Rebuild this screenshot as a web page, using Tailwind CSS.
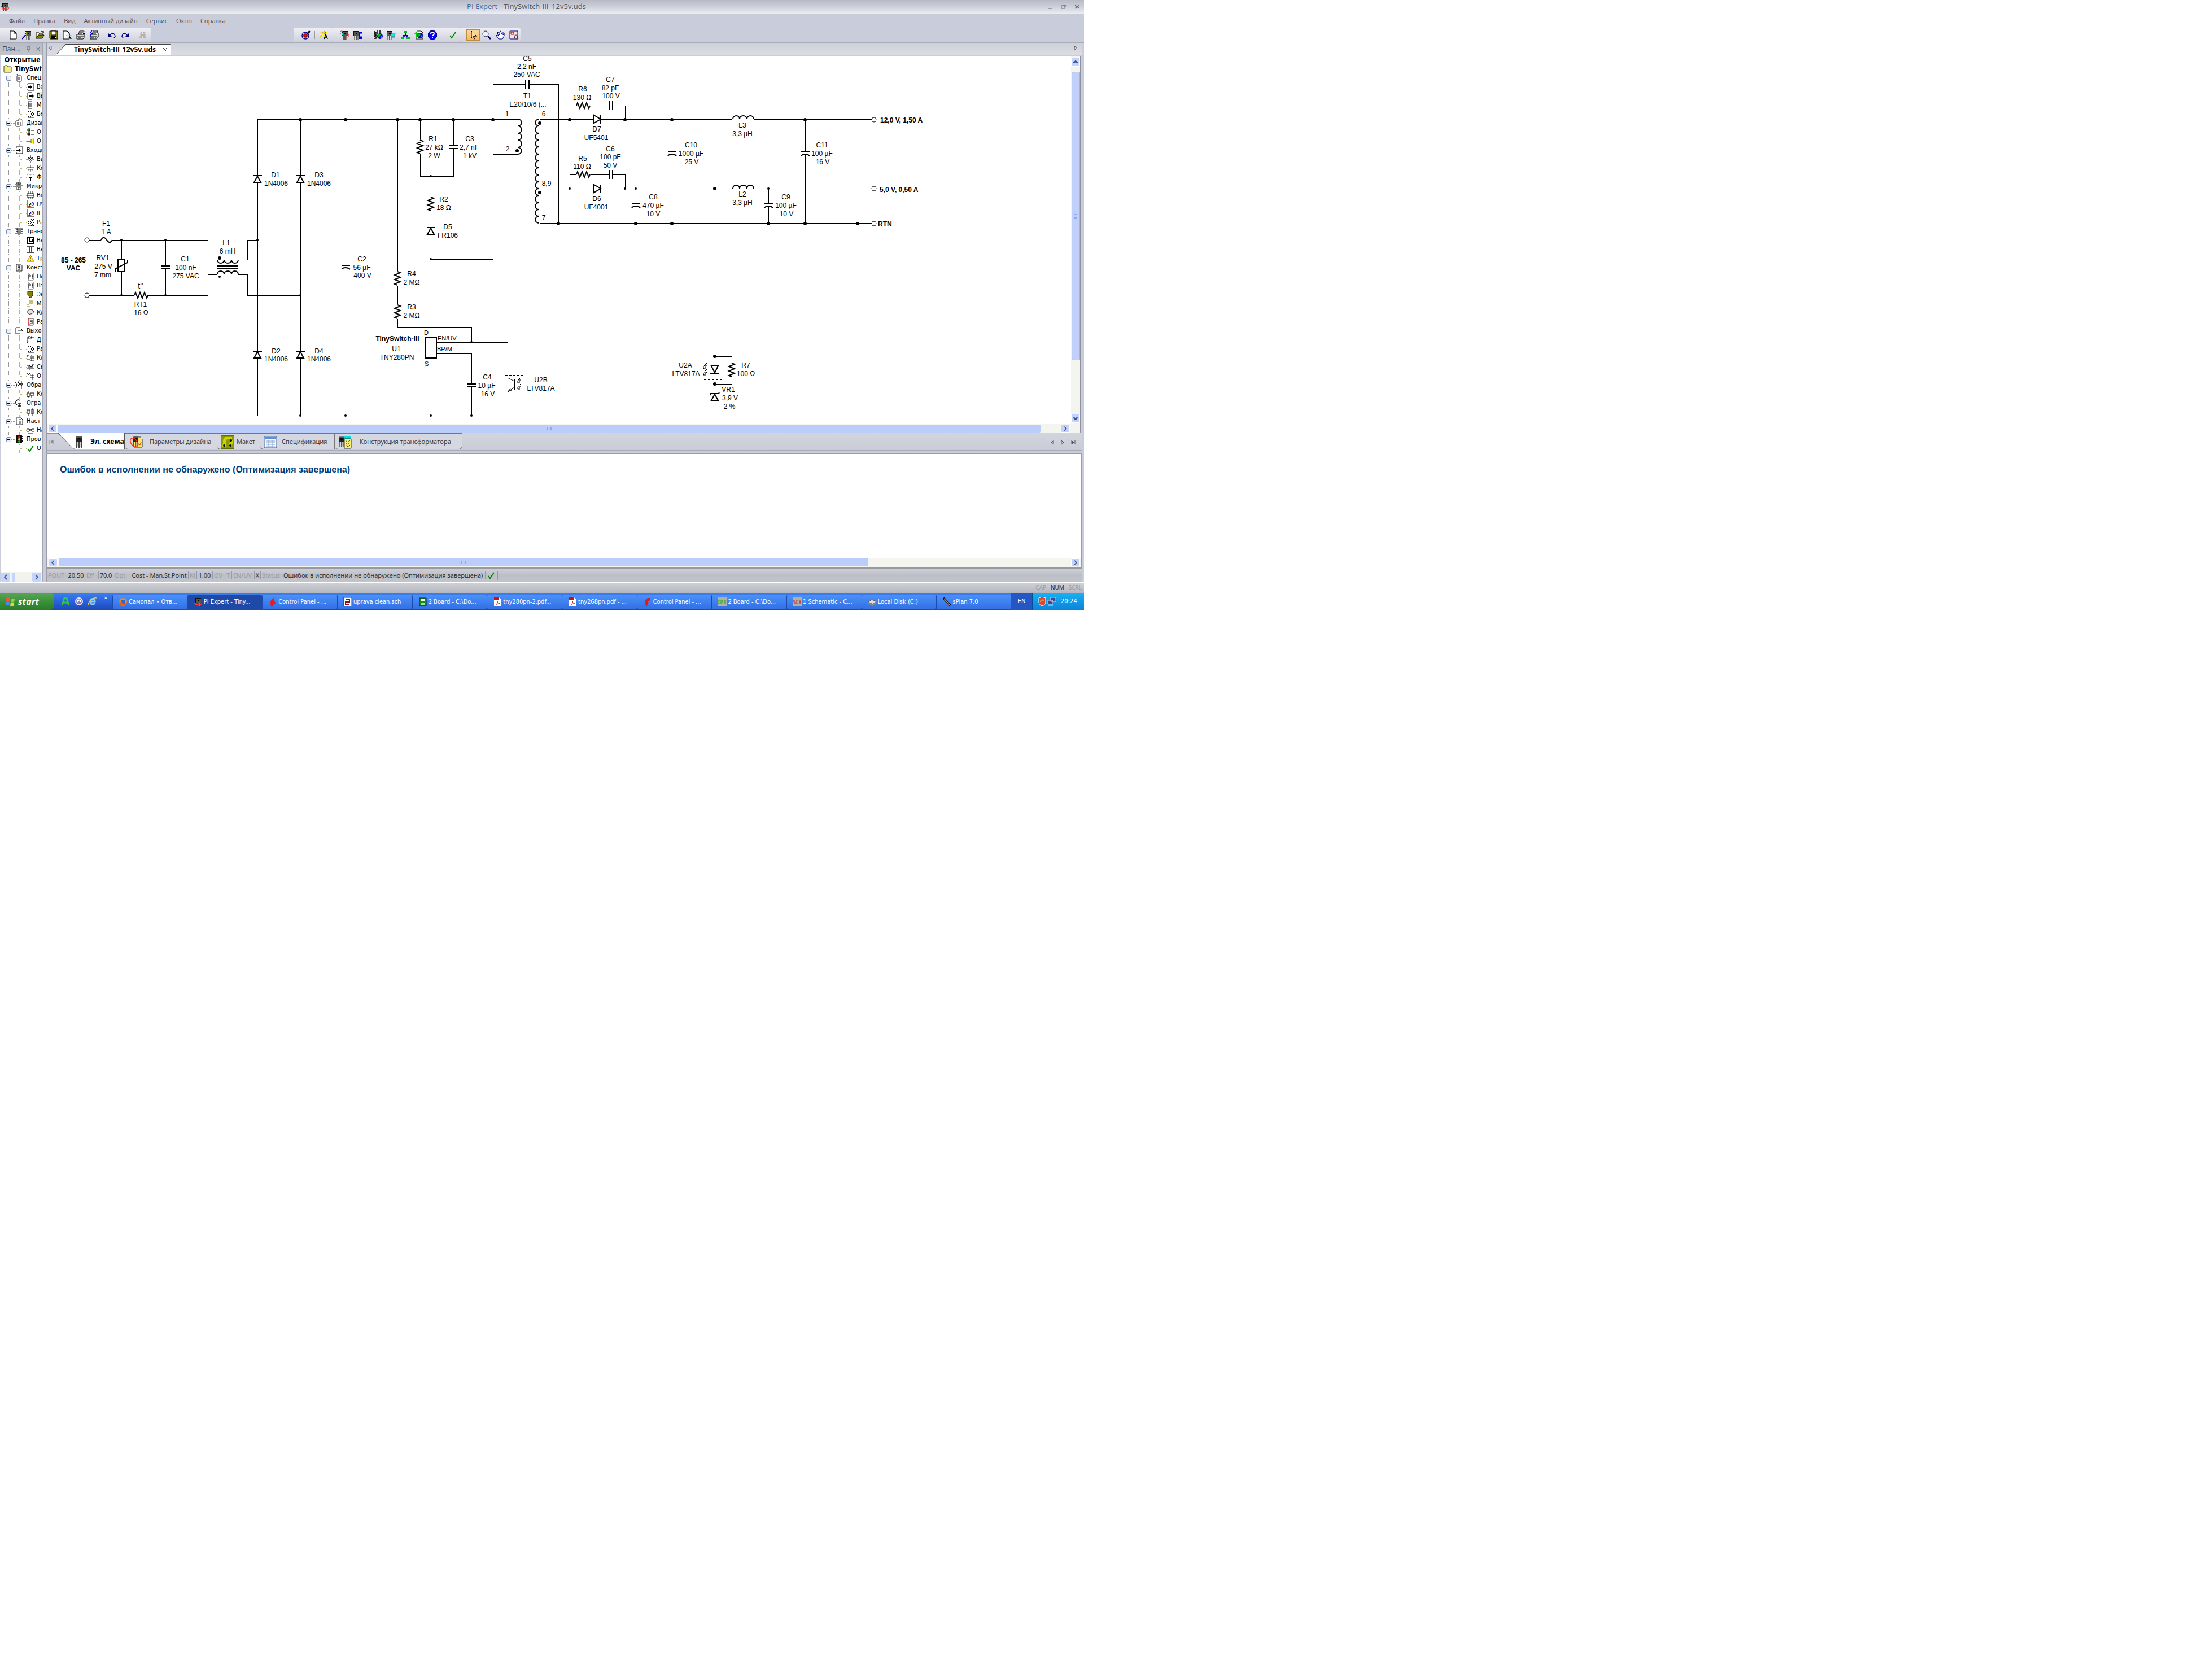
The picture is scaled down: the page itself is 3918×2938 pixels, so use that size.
<!DOCTYPE html>
<html lang="ru">
<head>
<meta charset="utf-8">
<title>PI Expert - TinySwitch-III_12v5v.uds</title>
<script src="https://cdn.jsdelivr.net/npm/@tailwindcss/browser@4"></script>
</head>
<body class="bg-white font-['Open_Sans','Noto_Sans',sans-serif] text-xs text-[#1a1a1a]">

<svg class="hidden" aria-hidden="true">
  <defs>
    <symbol id="chip" viewBox="0 0 16 16"><path d="M3 1h10v8h-1v7h-2V9H9v7H7V9H6v7H4V9H3z" fill="#555"/><path d="M3 1h10v2H3zM3 3h1v6H3z" fill="#111"/><path d="M7 4h3v3H7z" fill="#000"/><path d="M10 9h2v7h-2zM4 9h1v7H4z" fill="#8c8a70"/></symbol>
    <symbol id="new" viewBox="0 0 16 16"><path d="M3 1h7l4 4v10H3z" fill="#fff" stroke="#000"/><path d="M10 1v4h4" fill="none" stroke="#000"/></symbol>
    <symbol id="wizard" viewBox="0 0 16 16"><use href="#chip" x="3"/><path d="M0 15L8 6" stroke="#00009c" stroke-width="2"/><path d="M5 2l6 6M11 3l-6 6M8 2v8" stroke="#ff0"/></symbol>
    <symbol id="open" viewBox="0 0 16 16"><path d="M1 13V4h5l1 2h6v3" fill="#ffff9c" stroke="#000"/><path d="M1 14l4-6h10l-3 6z" fill="#848200" stroke="#000"/><path d="M9 3c2-3 4-2 5 1m0-3v3h-3" fill="none" stroke="#000"/></symbol>
    <symbol id="save" viewBox="0 0 16 16"><path d="M1 1h14v14H2l-1-1z" fill="#848200" stroke="#000"/><path d="M4 1h8v7H4z" fill="#fff" stroke="#000"/><path d="M4 10h9v5H4z" fill="#000"/><path d="M10 11h2v3h-2z" fill="#fff"/></symbol>
    <symbol id="preview" viewBox="0 0 16 16"><path d="M1 1h7l4 4v10H1z" fill="#fff" stroke="#000"/><circle cx="10" cy="9" r="3" fill="#d8f0f4" stroke="#333"/><path d="M12 11l3 4" stroke="#000" stroke-width="2"/></symbol>
    <symbol id="print" viewBox="0 0 16 16"><path d="M4 7l2-6h8l-2 6z" fill="#fff" stroke="#000"/><path d="M1 7h12l2-2v6l-3 4H1z" fill="#d8d8d8" stroke="#000"/><path d="M1 10h12M3 12h8M6 3h6M5 5h6" stroke="#000"/><path d="M8 12h2v1H8z" fill="#ff0"/></symbol>
    <symbol id="printsel" viewBox="0 0 16 16"><use href="#print"/><path d="M0 2l1 2 3-4M0 7l1 2 3-4" stroke="#00f" stroke-width="1.5" fill="none"/></symbol>
    <symbol id="undo" viewBox="0 0 16 16"><path d="M4 11c1-7 10-8 10 0l-2 2" fill="none" stroke="#00007b" stroke-width="1.5"/><path d="M2 5v7h7z" fill="#00007b"/></symbol>
    <symbol id="redo" viewBox="0 0 16 16"><path d="M12 11c-1-7-10-8-10 0l2 2" fill="none" stroke="#00007b" stroke-width="1.5"/><path d="M14 5v7H7z" fill="#00007b"/></symbol>
    <symbol id="find" viewBox="0 0 16 16"><path d="M4 3h3v4h2V3h3l2 10H9v-3H7v3H2z" fill="#b5b2a5"/><path d="M4 7v5M12 7v5M6 4v3M10 4v3" stroke="#e4e2da"/></symbol>
    <symbol id="target" viewBox="0 0 16 16"><circle cx="7" cy="9" r="6" fill="#fff" stroke="#000084" stroke-width="1.5"/><circle cx="7" cy="9" r="3" fill="#f00" stroke="#000" stroke-width="1.5"/><path d="M9 7l6-6M12 1v3h3" stroke="#000" stroke-width="1.5" fill="none"/></symbol>
    <symbol id="auto" viewBox="0 0 16 16"><path d="M1 13L11 3" stroke="#e7d800" stroke-width="2"/><path d="M3 5l8-4" stroke="#f66"/><path d="M2 4l10 8M11 1l4 5" stroke="#ff0" stroke-width="2"/><path d="M8 6l5-4" stroke="#22c"/><path d="M9 15l3-8 3 8M10 12h4" fill="none" stroke="#000" stroke-width="1.5"/></symbol>
    <symbol id="optim" viewBox="0 0 16 16"><use href="#chip" x="1"/><path d="M0 3c3-4 5-2 8 2M14 5c3 3 2 6-1 7M0 3c2 4 4 5 7 4" fill="none" stroke="#f33"/><path d="M3 4h3v4H3z" fill="#0ee"/></symbol>
    <symbol id="chipx" viewBox="0 0 16 16"><use href="#chip" x="-3"/><path d="M10 2h6v13h-6z" fill="#00f"/><path d="M12 4l3 4-3 4M15 4l-3 4 3 4" stroke="#fff" fill="none"/></symbol>
    <symbol id="globe" viewBox="0 0 16 16"><circle cx="10" cy="9" r="5" fill="#00c"/><path d="M8 5l3 1-1 3-3 2-1-3zM11 9l3-1-1 4-2 1z" fill="#0b3"/></symbol>
    <symbol id="bom" viewBox="0 0 16 16"><path d="M1 1v2h3v2H1v2h3v2H1v2h3v3H1M7 0v6M11 0v5" stroke="#000" fill="none" stroke-width="1.5"/><use href="#globe" x="1" y="1"/></symbol>
    <symbol id="cart" viewBox="0 0 16 16"><use href="#chip" x="-4"/><path d="M6 6h8l-2 5H7zM9 13h4" fill="#0ef" stroke="#666"/><path d="M13 6l3-2" stroke="#c55"/></symbol>
    <symbol id="net" viewBox="0 0 16 16"><path d="M8 3v5L3 13M8 8l5 5M4 9h8" stroke="#00c" stroke-width="2" fill="none"/><path d="M6 1h5v3H6zM0 11h6v4H0zM10 11h6v4h-6z" fill="#0b2"/></symbol>
    <symbol id="upload" viewBox="0 0 16 16"><path d="M5 1h7l3 3v11H3V8" fill="#fff" stroke="#222"/><path d="M3 2L0 6h2v6h3V6h2z" fill="#0c0"/><use href="#globe"/></symbol>
    <symbol id="help" viewBox="0 0 16 16"><circle cx="8" cy="8" r="8" fill="#00f" stroke="#000060"/><path d="M5 6c0-4 6-4 6 0 0 2-3 2-3 4M8 11v2" stroke="#fff" stroke-width="2" fill="none"/></symbol>
    <symbol id="check" viewBox="0 0 16 16"><path d="M3 9l3 4 7-10" stroke="#008200" stroke-width="2" fill="none"/></symbol>
    <symbol id="arrow" viewBox="0 0 16 16"><path d="M5 1v12l3-3 2 5 2-1-2-4h4z" fill="#ffd99a" stroke="#000"/></symbol>
    <symbol id="zoomer" viewBox="0 0 16 16"><circle cx="6" cy="6" r="5" fill="#eef" stroke="#222"/><path d="M10 10l5 5" stroke="#000084" stroke-width="2.5"/></symbol>
    <symbol id="hand" viewBox="0 0 16 16"><path d="M5 15L1 9l1-1 3 2-2-6 1-1 3 5V2l2-1 1 6 2-5 1 1v5l2-3v4l-3 6z" fill="#fff" stroke="#000084"/></symbol>
    <symbol id="fit" viewBox="0 0 16 16"><path d="M1 1h14v14H1z" fill="#e8e8ee" stroke="#000084"/><path d="M3 3h5v4H3z" fill="none" stroke="#900"/><circle cx="12" cy="11" r="3" fill="none" stroke="#900"/></symbol>

    <symbol id="t-spec" viewBox="0 0 14 14"><path d="M3 3h8v10H3zM5 6h4M5 8h4M5 10h4" fill="none" stroke="#222"/><path d="M3 0l2 4" stroke="#00c"/></symbol>
    <symbol id="t-in" viewBox="0 0 14 14"><path d="M2 3V1h11v12H2v-2" fill="none" stroke="#000"/><path d="M2 6h4V3l4 4-4 4V8H2z"/></symbol>
    <symbol id="t-out" viewBox="0 0 14 14"><path d="M10 1H2v12h8" fill="none" stroke="#000"/><path d="M5 6h4V3l4 4-4 4V8H5z"/></symbol>
    <symbol id="t-list" viewBox="0 0 14 14"><path d="M10 1H3v12h7M3 4h7M3 7h7M3 10h7" fill="none" stroke="#111"/></symbol>
    <symbol id="t-res" viewBox="0 0 14 14"><path d="M5 1L2 4l3 3-3 3 3 3M9 1L6 4l3 3-3 3 3 3M13 1l-3 3 3 3-3 3 3 3M2 13h11" fill="none" stroke="#111"/></symbol>
    <symbol id="t-docs" viewBox="0 0 14 14"><path d="M5 3V0h6l2 2v9h-3" fill="none" stroke="#888"/><path d="M1 3h6l2 2v8H1zM3 6h4M3 8h4M3 10h4" fill="none" stroke="#111"/></symbol>
    <symbol id="t-opt" viewBox="0 0 14 14"><path d="M2 1h4v4H2z" fill="#0c2" stroke="#000"/><path d="M2 8h4v4H2z" fill="#c00" stroke="#000"/><path d="M8 4h5M8 11h5" stroke="#000"/></symbol>
    <symbol id="t-key" viewBox="0 0 14 14"><path d="M0 7h8M1 7v2M3 7v2" stroke="#8a8400" stroke-width="2"/><path d="M8 4l5-1v8l-5-1z" fill="#ff0" stroke="#7a7400"/></symbol>
    <symbol id="t-bridge" viewBox="0 0 14 14"><path d="M7 0v3L2 7l5 4v3M7 3l5 4-5 4M0 7h2M12 7h2M3 3l8 8M11 3l-8 8" fill="none" stroke="#111"/></symbol>
    <symbol id="t-cap" viewBox="0 0 14 14"><path d="M7 1v5M1 6h12M2 11c3-3 7-3 10 0M7 9v5" fill="none" stroke="#222"/></symbol>
    <symbol id="t-pin" viewBox="0 0 14 14"><path d="M1 3l3-2 3 2 3-2 3 2" fill="none" stroke="#999"/><path d="M4 7h6L8 9v5H6V9z" fill="#000"/></symbol>
    <symbol id="t-ic" viewBox="0 0 14 14"><path d="M2 1h8v11H2zM4 3h4v6H4zM0 3h2M0 7h2M10 6h4M6 0v13" fill="none" stroke="#111"/></symbol>
    <symbol id="t-pkg" viewBox="0 0 14 14"><path d="M1 4h12v6H1zM4 0v4M7 0v4M10 0v4M4 10v4M10 10v4M7 10v4M1 7h12" fill="none" stroke="#111"/></symbol>
    <symbol id="t-graph" viewBox="0 0 14 14"><path d="M2 0v13h12" fill="none" stroke="#000"/><path d="M3 10l5-5 6-3" fill="none" stroke="#00a"/><path d="M3 10l5-3 6-2" fill="none" stroke="#080"/><path d="M3 11l5-1 6-3" fill="none" stroke="#a00"/></symbol>
    <symbol id="t-trans" viewBox="0 0 14 14"><path d="M0 1h4v3H1h3v3H1h3v3H0M6 0v13M8 0v13M14 1h-4v3h3-3v3h3-3v4h4" fill="none" stroke="#111"/></symbol>
    <symbol id="t-core" viewBox="0 0 14 14"><path d="M1 2h12v10H1zM5 2v6h5V5" fill="none" stroke="#000" stroke-width="2"/></symbol>
    <symbol id="t-bob" viewBox="0 0 14 14"><path d="M1 2h12M1 12h12M5 2v10M9 2v10" fill="none" stroke="#111" stroke-width="1.5"/></symbol>
    <symbol id="t-warn" viewBox="0 0 14 14"><path d="M7 1l6 11H1z" fill="#ff0" stroke="#f33"/><path d="M7 4v4M7 9v2" stroke="#000"/></symbol>
    <symbol id="t-doc3" viewBox="0 0 14 14"><path d="M2 1h8l2 2v10H2z" fill="#eee" stroke="#222"/><path d="M5 4h3v3H5h3v3H5" fill="none" stroke="#111"/></symbol>
    <symbol id="t-docp" viewBox="0 0 14 14"><path d="M12 1v12H3V1" fill="none" stroke="#555"/><path d="M4 11V4h3v3H4M9 4h2v3H9h2v3H9" fill="none" stroke="#111"/></symbol>
    <symbol id="t-shield" viewBox="0 0 14 14"><path d="M2 1h9v7l-4 5-5-5z" fill="#848200" stroke="#222"/></symbol>
    <symbol id="t-wire" viewBox="0 0 14 14"><path d="M4 1h7M4 3h7M4 5h7M4 7h7M4 9H1l-1 3h6" fill="none" stroke="#848200"/></symbol>
    <symbol id="t-bubble" viewBox="0 0 14 14"><path d="M5 9C-1 7 2 1 7 1s8 5 3 7c-3 2-5 0-8 4" fill="#e4e4e4" stroke="#222"/></symbol>
    <symbol id="t-doc12" viewBox="0 0 14 14"><path d="M3 1h9v12H3z" fill="#eee" stroke="#444"/><path d="M3 1v4M2 9h3l-3 3h4" stroke="#f00" fill="none"/><path d="M7 4h3v3H7h3v3H7" fill="none" stroke="#111"/></symbol>
    <symbol id="t-exit" viewBox="0 0 14 14"><path d="M9 1H1v11h8M4 6h9M10 3l3 3-3 3" fill="none" stroke="#111"/></symbol>
    <symbol id="t-diode" viewBox="0 0 14 14"><path d="M0 3h4M1 3v9l3-2M4 0l5 3-5 3zM9 0v6M9 3h4" fill="none" stroke="#111"/></symbol>
    <symbol id="t-caps" viewBox="0 0 14 14"><path d="M2 1v4M0 3h4M1 9h5M6 4h7M6 7h7M9 1v3M9 7v6M6 12h7" fill="none" stroke="#111"/></symbol>
    <symbol id="t-drive" viewBox="0 0 14 14"><path d="M0 4h5l3 3 3-3V2h3v8H0zM3 7h8M5 10v3" fill="none" stroke="#111"/></symbol>
    <symbol id="t-filter" viewBox="0 0 14 14"><path d="M0 5l2-3 2 3 2-3 1 3M7 6h7M7 9h7M10 3v11" fill="none" stroke="#111"/></symbol>
    <symbol id="t-fb" viewBox="0 0 14 14"><path d="M0 2l3 4-2 6M5 2l3 3-3 3 3 3M9 4h4l-2 5zM11 0v14M6 0v3" fill="none" stroke="#111"/></symbol>
    <symbol id="t-fb2" viewBox="0 0 14 14"><path d="M1 11V5h4v6zM3 1v4M3 11v2M7 5h6v4H7zM9 9v4M0 11h6" fill="none" stroke="#111"/></symbol>
    <symbol id="t-clamp" viewBox="0 0 14 14"><path d="M3 10c-5-4 0-12 5-8M8 8v5M5 8h5M5 12h5" fill="none" stroke="#111" stroke-width="1.5"/></symbol>
    <symbol id="t-clamp2" viewBox="0 0 14 14"><path d="M1 3h5v6H1zM3 9v4M9 2h3v8H9zM10 0v14" fill="none" stroke="#111"/></symbol>
    <symbol id="t-conf" viewBox="0 0 14 14"><path d="M2 1h8l3 3v9H2zM4 4h1M7 4h3M4 7h1M7 7h4M4 10h1M7 10h4" fill="#fff" stroke="#222"/></symbol>
    <symbol id="t-tune" viewBox="0 0 14 14"><path d="M0 4h4l6 5h4M0 9h4l6-5h4M0 6h14M3 12h8" fill="none" stroke="#111"/></symbol>
    <symbol id="t-light" viewBox="0 0 14 14"><path d="M3 0h8v14H3zM1 2h12M1 6h12M1 10h12" stroke="#111" stroke-width="2"/><circle cx="7" cy="3" r="2" fill="#f00"/><circle cx="7" cy="7" r="2" fill="#fd0"/><circle cx="7" cy="11" r="2" fill="#0c0"/></symbol>
    <symbol id="t-ok" viewBox="0 0 14 14"><path d="M2 8l4 4 6-10" stroke="#008a00" stroke-width="2" fill="none"/></symbol>
    <symbol id="t-folder" viewBox="0 0 16 14"><path d="M1 13V2l2-1h4l1 2h6v10z" fill="#f5ef7a" stroke="#444"/></symbol>

    <symbol id="pcb" viewBox="0 0 24 24"><path d="M0 0h24v24H0z" fill="#8a9a00"/><path d="M4 18V8l4-5h12v4H11l-2 3v8zM14 20v-6l7-6v6l-3 6z" fill="#cbd400"/><circle cx="6" cy="18" r="3" fill="#d8e000"/><circle cx="6" cy="18" r="2"/><circle cx="17" cy="18" r="2"/><circle cx="18" cy="9" r="2"/><path d="M0 0h24v24H0z" fill="none" stroke="#3a4200"/></symbol>
    <symbol id="table" viewBox="0 0 24 24"><path d="M1 2h22v20H1z" fill="#f4f8ff" stroke="#2a5090"/><path d="M2 3h20v4H2z" fill="#5b8fe0"/><path d="M4 10h16M4 13h16M4 16h16M4 19h16M9 8v13M15 8v13" stroke="#8ea4c8"/></symbol>
    <symbol id="bigchip" viewBox="0 0 24 24"><path d="M6 2h12v11H6z" fill="#222"/><path d="M6 2h12v3H6z" fill="#555"/><path d="M10 5h4v3h-4z" fill="#000"/><path d="M7 13v10M12 13v10M17 13v10" stroke="#444" stroke-width="2"/><path d="M9 13v9M14 13v9" stroke="#aaa"/></symbol>
    <symbol id="bigparam" viewBox="0 0 24 24"><path d="M8 3h12l3 3v15H8z" fill="#ffe96a" stroke="#333"/><use href="#bigchip" width="20" height="22" x="1"/><path d="M2 12C0 2 10 4 13 10s6 10 8 2M2 12c3 8 8 8 14 6" fill="none" stroke="#f30" stroke-width="1.5"/></symbol>
    <symbol id="bigtrans" viewBox="0 0 24 24"><use href="#bigchip" width="20" height="22" x="-4"/><path d="M11 1h12v5H11z" fill="#0dd"/><path d="M11 6h12v17H11z" fill="#fff27a" stroke="#333"/><path d="M13 9l4 3 4-3M13 13l4 3 4-3M13 17l4 3 4-3" stroke="#333" fill="none"/></symbol>
  </defs>
</svg>

<div class="flex w-full max-w-[1920px] flex-col overflow-hidden bg-[#c9ccda]">

  <header class="flex h-[25px] items-center bg-linear-to-b from-[#b8bac6] via-[#cdd0db] to-[#ececef] pl-px pr-2 border-b border-[#b4b6c2]">
    <svg class="size-4 shrink-0" viewBox="0 0 16 16"><use href="#chip"/><path d="M1 10c4 4 9 4 14 1M1 7l6 5 8-3" stroke="#f22" fill="none"/></svg>
    <h1 class="flex-1 pr-2 text-center text-[13px] text-[#4e5868]"><span class="text-[#3a6ea5]">PI Expert -</span> TinySwitch-III_12v5v.uds</h1>
    <div class="flex items-center gap-4 text-[#666]">
      <button aria-label="Свернуть"><svg class="size-2" viewBox="0 0 8 8"><path d="M0 7h8" stroke="currentColor"/></svg></button>
      <button aria-label="Восстановить"><svg class="size-2" viewBox="0 0 8 8"><path d="M0 2h6v5H0zM2 1h6v4" stroke="currentColor" fill="none"/></svg></button>
      <button aria-label="Закрыть"><svg class="size-2" viewBox="0 0 8 8"><path d="M0 1l8 6M8 1L0 7" stroke="currentColor" stroke-width="1.5"/></svg></button>
    </div>
  </header>

  <nav class="flex h-[25px] items-center gap-[15px] pl-4 text-[11px] text-[#4c4e58]">
    <a href="#">Файл</a><a href="#">Правка</a><a href="#">Вид</a><a href="#">Активный дизайн</a><a href="#">Сервис</a><a href="#">Окно</a><a href="#">Справка</a>
  </nav>

  <div class="flex h-[26px] items-stretch border-b border-[#a9abb8]" id="toolbar"></div>

  <div class="flex">
    <aside class="flex w-[76px] shrink-0 flex-col overflow-hidden border-r border-[#a4a6b0]">
      <div class="mt-px flex h-5 items-center bg-linear-to-b from-[#b9bbc8] to-[#c3c5cb] pl-1 text-xs text-[#4a4a50]">
        <span class="w-[42px]">Пан...</span>
        <svg class="h-3 w-7" viewBox="0 0 28 12"><path d="M2 7h6M3 1v6M7 1v6M3 1h4M5 7v4M18 2l7 8M25 2l-7 8" stroke="#666" fill="none"/></svg>
      </div>
      <div class="ml-px flex-1 overflow-hidden border-l border-t border-[#55534a] bg-white font-['DejaVu_Sans_Condensed','Noto_Sans',sans-serif] text-[11px] whitespace-nowrap" id="tree"></div>
      <div class="ml-0.5 flex h-[18px] items-center justify-between bg-[#f3f3ee] pr-0.5">
        <button class="h-4 w-4 rounded-xs bg-[#c3d3fd]" aria-label="Влево"><svg viewBox="0 0 16 16"><path d="M10 4L6 8l4 4" stroke="#4d6185" stroke-width="2" fill="none"/></svg></button>
        <span class="mr-7 h-4 w-1.5 bg-[#c3d3fd]"></span>
        <button class="h-4 w-4 rounded-xs bg-[#c3d3fd]" aria-label="Вправо"><svg viewBox="0 0 16 16"><path d="M6 4l4 4-4 4" stroke="#4d6185" stroke-width="2" fill="none"/></svg></button>
      </div>
    </aside>

    <main class="ml-1.5 mr-1 flex min-w-0 flex-1 flex-col border-l border-[#9a9ca8]">
      <div class="flex h-[22px] items-end border-b border-[#8f91a0] bg-linear-to-b from-[#cdcfd9] to-[#dcdde4]">
        <svg class="h-5 w-4" viewBox="0 0 16 20"><path d="M8 5v7L4 8z" stroke="#777" fill="none"/></svg>
        <svg class="h-[19px] w-[18px]" viewBox="0 0 18 19"><path d="M0 19L18 0v19z" fill="#fff"/><path d="M0 19L18 0" stroke="#444"/></svg>
        <button class="flex h-[19px] w-[186px] items-center rounded-tr-xs border-r border-t border-[#444] bg-white pl-3.5 text-xs font-bold text-black">TinySwitch-III_12v5v.uds
          <svg class="ml-auto mr-1.5 size-2" viewBox="0 0 8 8"><path d="M0 0l8 8M8 0L0 8" stroke="#444"/></svg></button>
        <svg class="ml-auto mr-1 h-5 w-3" viewBox="0 0 12 20"><path d="M3 5v7l5-4z" stroke="#444" fill="none"/></svg>
      </div>

      <div class="mr-0.5 mt-0.5 flex border-r border-[#8f91a0] bg-white">
        <div class="min-w-0 flex-1 overflow-hidden">
          <svg class="block h-[651px] w-[1812px] max-w-none font-['Liberation_Sans',Arial,sans-serif]" viewBox="83 100 1812 651" font-size="12" fill="#000">
            <defs>
              <g id="resv" fill="none" stroke="#000" stroke-width="2"><path d="M0 0l5 2-10 4 10 4-10 4 10 4-10 4 5 2"/></g>
              <g id="resh" fill="none" stroke="#000" stroke-width="2"><path d="M0 0l2-5 4 10 4-10 4 10 4-10 4 10 2-5"/></g>
              <g id="diode"><path d="M0 1l-6 11H6z" fill="#fff" stroke="#000" stroke-width="2"/><path d="M-7 0H8" stroke="#000" stroke-width="2"/></g>
              <g id="dioder"><path d="M12 0L0-7V7z" fill="#fff" stroke="#000" stroke-width="2"/><path d="M12-7V8" stroke="#000" stroke-width="2"/></g>
              <g id="caph"><path d="M-7 1H8V4H-7z" fill="#fff"/><path d="M-7 0H8M-7 5H8" stroke="#000" stroke-width="2"/></g>
              <g id="capv"><path d="M1-7V8H5V-7z" fill="#fff"/><path d="M0-8V8M6-8V8" stroke="#000" stroke-width="2"/></g>
              <g id="capp"><path d="M-6 1H7V3H-6z" fill="#fff"/><path d="M-7 0H8M-7 7C-4 3 4 3 8 7" fill="none" stroke="#000" stroke-width="2"/></g>
              <path id="coilh" d="M0 0c0-8 12-8 12 0c0-8 13-8 13 0c0-8 12-8 12 0" fill="none" stroke="#000" stroke-width="2"/>
              <circle id="dot" r="3"/>
              <circle id="term" r="4" fill="#fff" stroke="#000"/>
              <path id="rays" d="M6 0L1 5l5 0L0 10M0 6v4h4M6 11L1 16h5L0 21M0 17v4h4" fill="none" stroke="#000"/>
            </defs>

            <g fill="none" stroke="#000" shape-rendering="crispEdges">
              <path d="M456 736V211H917M532 211V736M612 211V736M704 211V579H835V606M744 211V312H803V211M763 312V598M763 634V736M873 211V149H989V396M917 273H873V459H763M456 736H899V694M774 606H899V669M774 626H835V736"/>
              <path d="M957 211H1297M1335 211H1544M957 334H1297M1335 334H1544M957 395H1544M1009 211V187H1107V211M1009 334V309H1107V334M1126 334V395M1190 211V395M1266 334V731H1351V435H1519V395M1361 334V395M1426 211V395M1266 631H1296V680H1266"/>
              <path d="M158 425H179M199 425H368V460H385M422 460H438V425H456M158 523H368V486H385M422 486H438V523H532M215 425V523M293 425V523M933 211V395M938 211V395"/>
              <path d="M1246 637H1280V672H1246M927 664H892V699H924" stroke-dasharray="4 3"/>
            </g>

            <path d="M1020 187H1046M1020 309H1046M238 523H262M704 480V506M704 539V565M744 247V273M763 348V374M1296 642V668" stroke="#fff" stroke-width="3"/>
            <use href="#resh" x="1021" y="187"/><use href="#resh" x="1021" y="309"/><use href="#resh" x="238" y="523"/>
            <use href="#resv" x="704" y="481"/><use href="#resv" x="704" y="540"/><use href="#resv" x="744" y="248"/><use href="#resv" x="763" y="349"/><use href="#resv" x="1296" y="643"/>
            <use href="#diode" x="456" y="311"/><use href="#diode" x="532" y="311"/><use href="#diode" x="456" y="622"/><use href="#diode" x="532" y="622"/><use href="#diode" x="763" y="403"/>
            <use href="#dioder" x="1052" y="211"/><use href="#dioder" x="1052" y="334"/>
            <use href="#caph" x="293" y="471"/><use href="#caph" x="803" y="258"/><use href="#caph" x="835" y="680"/>
            <use href="#capv" x="931" y="149"/><use href="#capv" x="1079" y="187"/><use href="#capv" x="1079" y="309"/>
            <use href="#capp" x="612" y="470"/><use href="#capp" x="1126" y="361"/><use href="#capp" x="1190" y="269"/><use href="#capp" x="1361" y="361"/><use href="#capp" x="1426" y="269"/>
            <use href="#coilh" x="1298" y="211"/><use href="#coilh" x="1298" y="334"/><use href="#coilh" x="385" y="486"/>
            <use href="#coilh" transform="translate(385 460) scale(1 -1)"/>

            <g fill="none" stroke="#000" stroke-width="2">
              <path d="M917 211c9 0 9 12 0 12c9 0 9 13 0 13c9 0 9 12 0 12c9 0 9 13 0 13c9 0 9 12 0 12"/>
              <path d="M955 211c-9 0-9 12 0 12c-9 0-9 13 0 13c-9 0-9 12 0 12c-9 0-9 12 0 12c-9 0-9 13 0 13c-9 0-9 12 0 12c-9 0-9 12 0 12c-9 0-9 13 0 13c-9 0-9 12 0 12c-9 0-9 12 0 12c-9 0-9 12 0 12c-9 0-9 13 0 13c-9 0-9 12 0 12c-9 0-9 12 0 12c-9 0-9 12 0 12"/>
              <path d="M179 425c3-6 7-5 10 0s7 6 10 0M384 471H422M384 475H422"/>
              <path d="M209 460H221V481H209z" fill="#fff"/><path d="M204 481V476L226 465V460"/>
              <path d="M753 598H773V634H753z" fill="#fff"/>
              <path d="M1260 648H1272L1266 660z" fill="#fff"/><path d="M1258 661H1274"/>
              <path d="M1266 698L1260 709H1272z" fill="#fff"/><path d="M1258 700L1259 697H1273L1274 695"/>
              <path d="M911 672V691"/>
            </g>
            <path d="M899 669L911 675M911 686L899 694M905 687l-6 7 7-3" fill="none" stroke="#000"/>
            <use href="#rays" x="1246" y="643"/><use href="#rays" x="917" y="668"/>

            <use href="#dot" x="532" y="212"/><use href="#dot" x="612" y="212"/><use href="#dot" x="704" y="212"/><use href="#dot" x="744" y="212"/><use href="#dot" x="803" y="212"/><use href="#dot" x="873" y="212"/>
            <use href="#dot" x="989" y="396"/><use href="#dot" x="1009" y="212"/><use href="#dot" x="1107" y="212"/><use href="#dot" x="1190" y="212"/><use href="#dot" x="1190" y="396"/><use href="#dot" x="1126" y="396"/><use href="#dot" x="1266" y="334"/><use href="#dot" x="1361" y="396"/><use href="#dot" x="1426" y="212"/><use href="#dot" x="1426" y="396"/><use href="#dot" x="1519" y="396"/><use href="#dot" x="1266" y="631"/><use href="#dot" x="1266" y="680"/>
            <use href="#dot" x="916" y="267"/><use href="#dot" x="956" y="218"/><use href="#dot" x="956" y="341"/><use href="#dot" x="389" y="457"/>
            <g><circle cx="389" cy="490" r="2"/><circle cx="215" cy="425" r="2"/><circle cx="215" cy="523" r="2"/><circle cx="293" cy="425" r="2"/><circle cx="293" cy="523" r="2"/><circle cx="456" cy="425" r="2"/><circle cx="532" cy="523" r="2"/><circle cx="763" cy="312" r="2"/><circle cx="763" cy="459" r="2"/><circle cx="835" cy="606" r="2"/><circle cx="835" cy="736" r="2"/><circle cx="763" cy="736" r="2"/><circle cx="612" cy="736" r="2"/><circle cx="532" cy="736" r="2"/><circle cx="1009" cy="334" r="2"/><circle cx="1107" cy="334" r="2"/><circle cx="1126" cy="334" r="2"/><circle cx="1361" cy="334" r="2"/></g>
            <use href="#term" x="154" y="425"/><use href="#term" x="154" y="523"/><use href="#term" x="1548" y="212"/><use href="#term" x="1548" y="334"/><use href="#term" x="1548" y="396"/>

            <g text-anchor="middle">
              <text x="188" y="400">F1</text><text x="188" y="415">1 A</text>
              <text x="182" y="461">RV1</text><text x="183" y="476">275 V</text><text x="182" y="491">7 mm</text>
              <text x="249" y="511" font-size="14">t°</text><text x="249" y="543">RT1</text><text x="250" y="558">16 Ω</text>
              <text x="328" y="463">C1</text><text x="329" y="478">100 nF</text><text x="329" y="493">275 VAC</text>
              <text x="401" y="434">L1</text><text x="403" y="449">6 mH</text>
              <text x="488" y="314">D1</text><text x="489" y="329">1N4006</text><text x="565" y="314">D3</text><text x="565" y="329">1N4006</text>
              <text x="489" y="626">D2</text><text x="489" y="640">1N4006</text><text x="565" y="626">D4</text><text x="565" y="640">1N4006</text>
              <text x="641" y="463">C2</text><text x="641" y="478">56 µF</text><text x="642" y="492">400 V</text>
              <text x="729" y="489">R4</text><text x="729" y="504">2 MΩ</text><text x="729" y="548">R3</text><text x="729" y="563">2 MΩ</text>
              <text x="767" y="250">R1</text><text x="769" y="265">27 kΩ</text><text x="769" y="280">2 W</text>
              <text x="832" y="250">C3</text><text x="831" y="265">2,7 nF</text><text x="832" y="280">1 kV</text>
              <text x="786" y="357">R2</text><text x="786" y="372">18 Ω</text><text x="793" y="406">D5</text><text x="793" y="421">FR106</text>
              <text x="702" y="622">U1</text><text x="703" y="637">TNY280PN</text>
              <text x="863" y="672">C4</text><text x="862" y="687">10 µF</text><text x="864" y="702">16 V</text>
              <text x="958" y="677">U2B</text><text x="958" y="692">LTV817A</text>
              <text x="934" y="108">C5</text><text x="933" y="122">2,2 nF</text><text x="933" y="136">250 VAC</text>
              <text x="934" y="174">T1</text><text x="935" y="189">E20/10/6 (...</text>
              <text x="898" y="206">1</text><text x="899" y="268">2</text><text x="963" y="206">6</text><text x="968" y="329">8,9</text><text x="963" y="390">7</text>
              <text x="1081" y="145">C7</text><text x="1081" y="160">82 pF</text><text x="1082" y="174">100 V</text>
              <text x="1032" y="162">R6</text><text x="1031" y="177">130 Ω</text><text x="1057" y="233">D7</text><text x="1056" y="248">UF5401</text>
              <text x="1081" y="268">C6</text><text x="1081" y="282">100 pF</text><text x="1081" y="297">50 V</text>
              <text x="1032" y="285">R5</text><text x="1031" y="299">110 Ω</text><text x="1057" y="356">D6</text><text x="1056" y="371">UF4001</text>
              <text x="1157" y="353">C8</text><text x="1157" y="368">470 µF</text><text x="1157" y="383">10 V</text>
              <text x="1224" y="261">C10</text><text x="1224" y="276">1000 µF</text><text x="1225" y="291">25 V</text>
              <text x="1315" y="226">L3</text><text x="1315" y="241">3,3 µH</text><text x="1315" y="348">L2</text><text x="1315" y="363">3,3 µH</text>
              <text x="1392" y="353">C9</text><text x="1392" y="368">100 µF</text><text x="1393" y="383">10 V</text>
              <text x="1456" y="261">C11</text><text x="1456" y="276">100 µF</text><text x="1457" y="291">16 V</text>
              <text x="1214" y="651">U2A</text><text x="1215" y="666">LTV817A</text><text x="1321" y="651">R7</text><text x="1321" y="666">100 Ω</text>
              <text x="1290" y="694">VR1</text><text x="1293" y="709">3,9 V</text><text x="1292" y="724">2 %</text>
              <g font-weight="bold"><text x="130" y="465">85 - 265</text><text x="130" y="479">VAC</text><text x="704" y="604">TinySwitch-III</text></g>
            </g>
            <g font-size="11"><text x="751" y="593">D</text><text x="752" y="648">S</text><text x="775" y="603">EN/UV</text><text x="774" y="622">BP/M</text></g>
            <g font-weight="bold"><text x="1559" y="217">12,0 V, 1,50 A</text><text x="1558" y="340">5,0 V, 0,50 A</text><text x="1555" y="401">RTN</text></g>
          </svg>
        </div>
        <div class="flex w-4 flex-col items-center justify-between bg-[#f5f5f0] py-0.5">
          <button class="size-4 rounded-xs border border-white bg-[#c3d3fd]" aria-label="Вверх"><svg viewBox="0 0 16 16"><path d="M4 10l4-4 4 4" stroke="#40537a" stroke-width="3" fill="none"/></svg></button>
          <div class="mb-[86px] flex h-[511px] w-[15px] items-center justify-center rounded-xs border border-[#9cb4ea] bg-[#c1d0fb]"><span class="h-2 w-1.5 border-y-2 border-[#8ca8ee]"></span></div>
          <button class="size-4 rounded-xs border border-white bg-[#c3d3fd]" aria-label="Вниз"><svg viewBox="0 0 16 16"><path d="M4 6l4 4 4-4" stroke="#40537a" stroke-width="3" fill="none"/></svg></button>
        </div>
      </div>

      <div class="mr-0.5 flex h-4 items-center gap-0.5 border-r border-[#8f91a0] bg-[#f5f5f0] pl-0.5 pr-[18px]">
        <button class="h-3.5 w-4 rounded-xs border border-white bg-[#c3d3fd]" aria-label="Влево"><svg viewBox="0 0 16 12"><path d="M10 2L6 6l4 4" stroke="#40537a" stroke-width="2" fill="none"/></svg></button>
        <div class="flex h-3.5 flex-1 items-center justify-center rounded-xs bg-[#bdcdfb]"><span class="h-1.5 w-2 border-x-2 border-[#8ca8ee]"></span></div>
        <span class="w-8"></span>
        <button class="h-3.5 w-4 rounded-xs border border-white bg-[#c3d3fd]" aria-label="Вправо"><svg viewBox="0 0 16 12"><path d="M6 2l4 4-4 4" stroke="#40537a" stroke-width="2" fill="none"/></svg></button>
      </div>

      <div class="flex h-[31px] items-start border-b border-[#a9abb8] bg-linear-to-b from-[#d3d5de] to-[#c9cbd6] whitespace-nowrap">
        <svg class="h-[29px] w-[49px] shrink-0" viewBox="0 0 49 29"><path d="M20 0L47 28H49V0z" fill="#fff"/><path d="M0 0H20L47 28H49" stroke="#555" fill="none"/><path d="M5 12v7M11 12v7l-4-4z" stroke="#888" fill="#888"/></svg>
        <button class="flex h-[29px] w-[89px] items-center gap-2 border-b border-r border-[#555] bg-white pt-0.5 text-xs font-bold text-black"><svg class="-ml-1 size-6 shrink-0"><use href="#bigchip"/></svg>Эл. схема</button>
        <button class="flex h-[29px] w-[164px] items-center gap-3 rounded-bl-md border-b border-r border-t border-[#777] bg-[#d6d8e1] pl-2 pt-0.5 text-[11px] text-[#333]"><svg class="size-6 shrink-0"><use href="#bigparam"/></svg>Параметры дизайна</button>
        <button class="flex h-[29px] w-[76px] items-center gap-1 rounded-bl-md border-b border-r border-t border-[#777] bg-[#d6d8e1] pl-1.5 pt-0.5 text-[11px] text-[#333]"><svg class="size-6 shrink-0"><use href="#pcb"/></svg>Макет</button>
        <button class="flex h-[29px] w-[132px] items-center gap-2 rounded-bl-md border-b border-r border-t border-[#777] bg-[#d6d8e1] pl-1.5 pt-0.5 text-[11px] text-[#333]"><svg class="size-6 shrink-0"><use href="#table"/></svg>Спецификация</button>
        <button class="flex h-[29px] w-[226px] items-center gap-3.5 rounded-b-md border-b border-r border-t border-[#777] bg-[#d6d8e1] pl-1.5 pt-0.5 text-[11px] text-[#333]"><svg class="size-6 shrink-0"><use href="#bigtrans"/></svg>Конструкция трансформатора</button>
        <svg class="ml-auto mr-2.5 h-[29px] w-12" viewBox="0 0 48 29"><path d="M8 13v7l-4-3zM22 13v7l4-3z" fill="none" stroke="#555"/><path d="M40 13v7l4-3zM46 13v7" fill="#555" stroke="#555"/></svg>
      </div>

      <section class="mt-[5px] flex h-[201px] flex-col border border-b-0 border-[#9a9ca8] bg-white">
        <p class="flex-1 pl-[22px] pt-4 font-['Liberation_Sans',Arial,sans-serif] text-base font-bold text-[#004080]">Ошибок в исполнении не обнаружено (Оптимизация завершена)</p>
        <div class="flex h-4 items-center gap-0.5 bg-[#f5f5f0] px-0.5">
          <button class="h-3.5 w-4 rounded-xs border border-white bg-[#c3d3fd]" aria-label="Влево"><svg viewBox="0 0 16 12"><path d="M10 2L6 6l4 4" stroke="#40537a" stroke-width="2" fill="none"/></svg></button>
          <div class="flex h-3.5 w-[78.5%] items-center justify-center rounded-xs border-r border-[#88a4e0] bg-[#bdcdfb]"><span class="h-1.5 w-2 border-x-2 border-[#8ca8ee]"></span></div>
          <button class="ml-auto h-3.5 w-4 rounded-xs border border-white bg-[#c3d3fd]" aria-label="Вправо"><svg viewBox="0 0 16 12"><path d="M6 2l4 4-4 4" stroke="#40537a" stroke-width="2" fill="none"/></svg></button>
        </div>
      </section>

      <footer class="mt-px flex h-[26px] items-center border-t-2 border-[#989aa2] bg-linear-to-b from-[#cfd0d6] via-[#bdbfc7] to-[#c2c4cc] pl-0.5 text-[11px] whitespace-nowrap text-[#2a2a2e]">
        <span class="w-[34px] border-r border-[#999ba6] text-[#999ba6]">POUT</span><span class="w-8 border-r border-[#999ba6] text-center">20,50</span>
        <span class="w-6 border-r border-[#999ba6] pl-0.5 text-[#999ba6]">Eff</span><span class="w-[26px] border-r border-[#999ba6] text-center">70,0</span>
        <span class="w-[30px] border-r border-[#999ba6] pl-0.5 text-[#999ba6]">Opt.</span><span class="w-[103px] border-r border-[#999ba6] text-center">Cost - Man.St.Point</span>
        <span class="w-[15px] border-r border-[#999ba6] pl-0.5 text-[#999ba6]">KI</span><span class="w-7 border-r border-[#999ba6] text-center">1,00</span>
        <span class="w-[22px] border-r border-[#999ba6] pl-0.5 text-[#999ba6]">OV</span><span class="w-3 border-r border-[#999ba6] pl-0.5 text-[#999ba6]">T</span><span class="w-10 border-r border-[#999ba6] pl-0.5 text-[#999ba6]">EN/UV</span><span class="w-[11px] border-r border-[#999ba6] text-center">X</span>
        <span class="w-10 pl-0.5 text-[#999ba6]">Status</span><span class="w-[358px] border-r border-[#999ba6]">Ошибок в исполнении не обнаружено (Оптимизация завершена)</span>
        <span class="w-[22px] border-r border-[#999ba6] pl-0.5"><svg class="size-4"><use href="#check"/></svg></span>
      </footer>
    </main>
  </div>

  <div class="flex h-[19px] items-center justify-end gap-2 border-t border-white bg-linear-to-b from-[#d0d1d6] to-[#b4b6bf] pr-1 text-[10px]">
    <span class="text-[#999ba6]">CAP</span><span class="text-[#222]">NUM</span><span class="text-[#999ba6]">SCRL</span>
  </div>

  <div class="flex h-[30px] items-stretch bg-linear-to-b from-[#3a80f0] via-[#2a62dc] to-[#1f49b4] font-['DejaVu_Sans_Condensed','Noto_Sans',sans-serif] text-[11px] text-white">
    <button class="flex w-24 items-center gap-1 rounded-r-lg bg-linear-to-b from-[#58a558] via-[#3a923a] to-[#2c7c2c] pl-2.5 font-['Open_Sans',sans-serif] text-base font-bold italic">
      <svg class="size-[18px]" viewBox="0 0 18 18"><path d="M1 3c3-2 5-1 7 0L7 9c-2-1-4-1-7 0z" fill="#f1582c"/><path d="M10 4c2 1 4 1 7-1l-2 7c-2 1-4 1-6 0z" fill="#8fcf3c"/><path d="M0 10c3-1 5-1 7 0l-1 6c-2-1-4-1-6 0z" fill="#3f8ff0"/><path d="M9 11c2 1 4 1 6 0l-1 6c-2 1-4 1-6 0z" fill="#fbcc2c"/></svg>start</button>
    <div class="flex w-[103px] items-center gap-2 pl-3">
      <svg class="size-4" viewBox="0 0 16 16"><path d="M2 15L6 2h4l4 13M4 10h8" stroke="#2ecc40" stroke-width="3" fill="none"/></svg>
      <svg class="size-4" viewBox="0 0 16 16"><circle cx="8" cy="8" r="6" fill="#8a7ac0" stroke="#e8e0ff" stroke-width="2"/><path d="M5 9c1-5 6-4 6 0" stroke="#fff" stroke-width="2" fill="none"/></svg>
      <svg class="size-4" viewBox="0 0 16 16"><path d="M4 8h8c0-5-7-6-8 0s6 6 8 3" stroke="#7fd0ff" stroke-width="3" fill="none"/><path d="M1 14C-1 9 9 0 15 2" stroke="#f5c838" fill="none" stroke-width="1.5"/></svg>
      <span class="-mt-3 ml-1">»</span>
    </div>
    <div class="flex min-w-0 flex-1 items-stretch" id="tasks"></div>
    <div class="flex w-[37px] shrink-0 items-center justify-center bg-[#2456c4]">EN</div>
    <div class="flex w-[92px] shrink-0 items-center gap-0.5 border-l border-[#0a4c96] bg-linear-to-b from-[#18b0f4] to-[#0d84d8] pl-2.5">
      <svg class="h-4 w-3.5" viewBox="0 0 14 16"><path d="M1 2l6-2 6 2v7c0 4-3 6-6 7-3-1-6-3-6-7z" fill="#e8402c" stroke="#fff"/><path d="M4 9c0-4 4-4 6-3" stroke="#8c4" stroke-width="2" fill="none"/></svg>
      <svg class="size-4" viewBox="0 0 16 16"><path d="M6 1h9v7H6zM1 6h9v7H1z" fill="#3a4b8c" stroke="#cfd8f0"/><path d="M2 15h8" stroke="#cfd8f0"/></svg>
      <time class="ml-1.5">20:24</time>
    </div>
  </div>
</div>

<script>
  const icon = (id, cls) => `<svg class="${cls}"><use href="#${id}"/></svg>`;

  const toolbar = [
    { cls: 'w-[268px] pl-[11px]', items: ['new', 'wizard', 'open', 'save', 'preview', 'print', 'printsel', '|', 'undo', 'redo', '|', 'find'] },
    { cls: 'ml-[252px] w-[68px] pl-2.5', items: ['target', '|', 'auto'] },
    { cls: 'w-[60px] pl-2.5', items: ['optim', 'chipx'] },
    { cls: 'w-[132px] pl-2.5', items: ['bom', 'cart', 'net', 'upload', 'help'] },
    { cls: 'w-9 pl-2.5', items: ['check'] },
    { cls: 'w-[106px] pl-2.5', items: ['arrow', 'zoomer', 'hand', 'fit'] },
  ];
  const names = { new: 'Новый', open: 'Открыть', save: 'Сохранить', print: 'Печать', undo: 'Отменить', redo: 'Повторить', find: 'Найти', help: 'Справка' };
  document.getElementById('toolbar').innerHTML = toolbar.map(g =>
    `<div class="flex shrink-0 items-center rounded-r-xs border-b border-[#a0a2b0] bg-linear-to-b from-[#eeeef3] to-[#cfd1dc] ${g.cls}">` +
    g.items.map(i => i === '|'
      ? '<span class="mx-[3px] h-3.5 w-px bg-[#9a9cab]"></span>'
      : `<button aria-label="${names[i] || i}" class="flex h-5 w-6 shrink-0 items-center justify-center ${i === 'arrow' ? 'border border-[#c08a3c] bg-linear-to-b from-[#fbd9a2] to-[#f9b65c]' : ''}">${icon(i, 'size-4 shrink-0')}</button>`).join('') +
    '</div>').join('');

  const tree = [
    [1, 't-spec', 'Специ'], [2, 't-in', 'Вх'], [2, 't-out', 'Вы'], [2, 't-list', 'М'], [2, 't-res', 'Бе'],
    [1, 't-docs', 'Дизай'], [2, 't-opt', 'О'], [2, 't-key', 'О'],
    [1, 't-in', 'Входн'], [2, 't-bridge', 'Вы'], [2, 't-cap', 'Ко'], [2, 't-pin', 'Ф'],
    [1, 't-ic', 'Микро'], [2, 't-pkg', 'Вы'], [2, 't-graph', 'UV'], [2, 't-graph', 'IL'], [2, 't-res', 'Ра'],
    [1, 't-trans', 'Транс'], [2, 't-core', 'Вы'], [2, 't-bob', 'Вы'], [2, 't-warn', 'Тр'],
    [1, 't-doc3', 'Конст'], [2, 't-docp', 'Пе'], [2, 't-docp', 'Вт'], [2, 't-shield', 'Эк'], [2, 't-wire', 'М'], [2, 't-bubble', 'Ко'], [2, 't-doc12', 'Ра'],
    [1, 't-exit', 'Выхо'], [2, 't-diode', 'Д'], [2, 't-res', 'Ра'], [2, 't-caps', 'Ко'], [2, 't-drive', 'Сн'], [2, 't-filter', 'О'],
    [1, 't-fb', 'Обра'], [2, 't-fb2', 'Ко'],
    [1, 't-clamp', 'Огра'], [2, 't-clamp2', 'Ко'],
    [1, 't-conf', 'Наст'], [2, 't-tune', 'На'],
    [1, 't-light', 'Пров'], [2, 't-ok', 'О'],
  ];
  document.getElementById('tree').innerHTML =
    '<div class="flex h-4 items-center pl-1.5 text-xs font-bold text-black">Открытые</div>' +
    `<div class="flex h-4 items-center pl-1 text-xs font-bold text-black">${icon('t-folder', 'mr-1 h-3.5 w-4 shrink-0')}TinySwit</div>` +
    tree.map(([level, id, label], n) => level === 1
      ? `<div class="flex h-4 items-center text-black"><span class="ml-[9px] flex size-[9px] shrink-0 items-center justify-center rounded-xs border border-[#7b93b8] bg-[#eef0f4]"><span class="h-px w-[5px] bg-black"></span></span><span class="w-1.5 shrink-0 border-t border-dotted border-[#999]"></span>${icon(id, 'ml-px mr-1.5 size-3.5 shrink-0')}${label}</div>`
      : `<div class="flex h-4 items-center text-black"><span class="ml-[13px] h-4 shrink-0 border-l border-dotted border-[#999] ${n > 40 ? 'invisible' : ''}"></span><span class="ml-[18px] h-4 w-px shrink-0 border-l border-dotted border-[#b9b86c]"></span><span class="w-3 shrink-0 border-t border-dotted border-[#b9b86c]"></span>${icon(id, 'mr-1 size-3.5 shrink-0')}<span class="${n === 2 ? 'bg-[#ece9d8]' : ''}">${label}</span></div>`).join('');

  const tasks = [
    ['Самопал • Отв...', '<circle cx="8" cy="8" r="7" fill="#f08a1c"/><circle cx="8" cy="8" r="4" fill="#2a6ad0"/><path d="M1 8c0 8 13 9 14 0-3 4-8 4-9 0z" fill="#e8581c"/>'],
    ['PI Expert - Tiny...', '<use href="#chip"/><path d="M1 10c4 4 9 4 14 1" stroke="#f33" stroke-width="2" fill="none"/>'],
    ['Control Panel - ...', '<path d="M9 0L3 8l2 6-3 2 6-1 2-3 4-1-2-3z" fill="#f01818"/>'],
    ['uprava clean.sch', '<path d="M1 0h14v16H1z" fill="#fff" stroke="#811"/><path d="M4 4h7v4H4v4h7" fill="none" stroke="#811" stroke-width="2"/>'],
    ['2 Board - C:\\Do...', '<path d="M2 1h12v14H2z" fill="#1a8a1a" stroke="#032"/><path d="M5 2h6v4H5z" fill="#fff"/><path d="M5 9h6v5H5z" fill="#8e8"/>'],
    ['tny280pn-2.pdf...', '<path d="M2 0h9l4 4v12H2z" fill="#fff"/><path d="M2 0h9v5H2z" fill="#c11"/><path d="M4 14c4-3 5-6 4-8 0 4 3 5 5 5-3-1-7 1-9 3z" fill="none" stroke="#c11"/>'],
    ['tny268pn.pdf - ...', '<path d="M2 0h9l4 4v12H2z" fill="#fff"/><path d="M2 0h9v5H2z" fill="#c11"/><path d="M4 14c4-3 5-6 4-8 0 4 3 5 5 5-3-1-7 1-9 3z" fill="none" stroke="#c11"/>'],
    ['Control Panel - ...', '<path d="M12 1C4 0 1 8 6 15l3-1c-2-3-1-4 1-5l-2-1 4-3z" fill="#e01828"/>'],
    ['2 Board - C:\\Do...', '<path d="M0 0h16v16H0z" fill="#b0b0a8"/><path d="M2 5h3v6H2zM7 5v6M7 5h2v3H7M12 5v6h2V5z" fill="none" stroke="#2a2"/>'],
    ['1 Schematic - C...', '<path d="M0 0h16v16H0z" fill="#b0b0a8"/><path d="M5 5H2v3h3v3H2M10 5H7v6h3M12 5v6M14 5v6M12 8h2" fill="none" stroke="#c22"/>'],
    ['Local Disk (C:)', '<path d="M1 8l6-4 8 3-6 5z" fill="#ddd" stroke="#555"/><path d="M1 8v3l8 4v-3zM9 12v3l6-5V7z" fill="#888"/>'],
    ['sPlan 7.0', '<path d="M2 1l12 13" stroke="#111" stroke-width="4"/><path d="M3 2l10 11" stroke="#d88" stroke-width="1.5"/>'],
  ];
  document.getElementById('tasks').innerHTML = tasks.map(([t, art], n) =>
    `<button class="mt-1 mb-0.5 flex min-w-0 flex-1 items-center gap-0.5 rounded-xs border-l border-[#1c4aae] pl-2.5 whitespace-nowrap ${n === 1 ? 'bg-[#1e49a6]' : 'bg-linear-to-b from-[#4a90fa] to-[#3470e4]'}"><svg class="size-4 shrink-0" viewBox="0 0 16 16">${art}</svg>${t}</button>`).join('');
</script>
</body>
</html>
